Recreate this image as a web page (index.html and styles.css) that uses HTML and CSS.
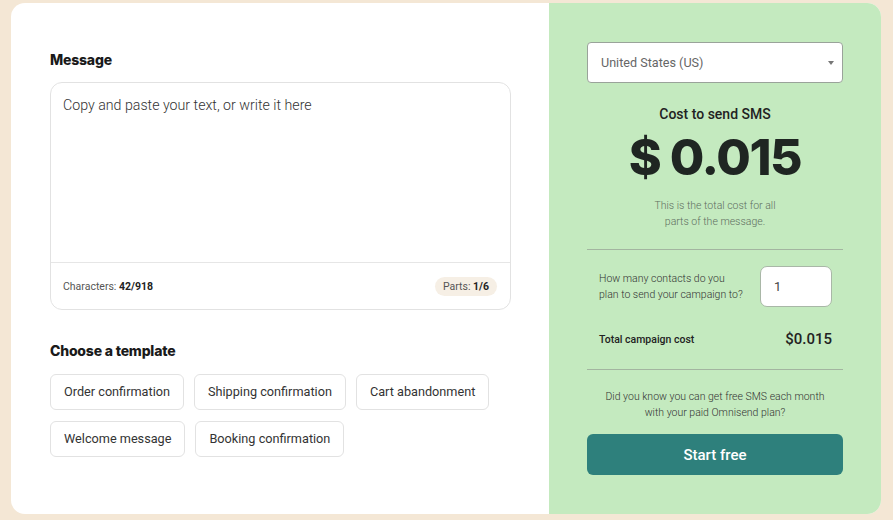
FILE: index.html
```html
<!DOCTYPE html>
<html>
<head>
<meta charset="utf-8">
<link rel="stylesheet" href="styles.css">
</head>
<body>
<div class="card">
  <section class="left">
    <h2 class="heading">Message</h2>
    <div class="msgbox">
      <div class="msgtext">Copy and paste your text, or write it here</div>
      <div class="msgfoot">
        <span class="chars">Characters: <b>42/918</b></span>
        <span class="parts">Parts: <b>1/6</b></span>
      </div>
    </div>
    <h2 class="heading tpl-heading">Choose a template</h2>
    <div class="templates">
      <div class="row">
        <span class="tpl">Order confirmation</span>
        <span class="tpl">Shipping confirmation</span>
        <span class="tpl">Cart abandonment</span>
      </div>
      <div class="row">
        <span class="tpl">Welcome message</span>
        <span class="tpl">Booking confirmation</span>
      </div>
    </div>
  </section>
  <section class="right">
    <div class="select">
      <span>United States (US)</span>
      <span class="caret"></span>
    </div>
    <div class="cost-title">Cost to send SMS</div>
    <div class="cost">$ 0.015</div>
    <div class="cost-note">This is the total cost for all<br>parts of the message.</div>
    <hr class="divider">
    <div class="contacts">
      <div class="contacts-label">How many contacts do you<br>plan to send your campaign to?</div>
      <div class="num-input">1</div>
    </div>
    <div class="total">
      <span class="total-label">Total campaign cost</span>
      <span class="total-val">$0.015</span>
    </div>
    <hr class="divider divider-2">
    <div class="promo">Did you know you can get free SMS each month<br>with your paid Omnisend plan?</div>
    <div class="btn">Start free</div>
  </section>
</div>
</body>
</html>
```

FILE: styles.css
```css
* { box-sizing: border-box; }
html, body { margin: 0; padding: 0; }
body {
  background: #f4e7d5;
  font-family: Roboto, "Liberation Sans", sans-serif;
  color: #222;
  width: 893px;
  height: 520px;
  padding: 3px 12px 6px 11px;
}
.card {
  display: flex;
  height: 511px;
  border-radius: 14px;
  overflow: hidden;
  background: #fff;
}
.left {
  width: 538px;
  padding: 48px 38px 0 39px;
}
.heading {
  margin: 0;
  font-family: Inter, "Open Sans", sans-serif;
  font-weight: 800;
  font-size: 14px;
  letter-spacing: -0.2px;
  line-height: 18px;
  color: #1a1a1a;
}
.msgbox {
  margin-top: 13px;
  width: 461px;
  height: 228px;
  border: 1px solid #e2e2e2;
  border-radius: 12px;
  display: flex;
  flex-direction: column;
}
.msgtext {
  flex: 1;
  padding: 13px 12px;
  font-size: 14.2px;
  font-weight: 300;
  color: #333;
  line-height: 18px;
}
.msgfoot {
  height: 47px;
  border-top: 1px solid #e6e6e6;
  display: flex;
  align-items: center;
  justify-content: space-between;
  padding: 0 13px 0 12px;
  font-size: 10.5px;
  color: #555;
}
.msgfoot b { color: #222; font-weight: 700; }
.parts {
  background: #f6efe5;
  border-radius: 10px;
  padding: 3px 8px;
}
.tpl-heading { margin-top: 32px; }
.templates {
  margin-top: 14px;
  display: flex;
  flex-direction: column;
  gap: 11px;
}
.row { display: flex; gap: 10px; }
.tpl {
  height: 36px;
  display: flex;
  align-items: center;
  padding: 0 13px 1px;
  border: 1px solid #e2e2e2;
  border-radius: 6px;
  font-size: 12.7px;
  color: #333;
}
.right {
  flex: 1;
  background: #c4eabf;
  padding: 39px 38px 0 38px;
  display: flex;
  flex-direction: column;
}
.select {
  height: 41px;
  background: #fff;
  border: 1px solid #9aa39a;
  border-radius: 4px;
  display: flex;
  align-items: center;
  justify-content: space-between;
  padding: 0 8px 0 13px;
  font-size: 12.6px;
  color: #666;
}
.caret {
  width: 0; height: 0;
  border-left: 3px solid transparent;
  border-right: 3px solid transparent;
  border-top: 4px solid #777;
}
.cost-title {
  margin-top: 22px;
  text-align: center;
  font-size: 14px;
  font-weight: 500;
  color: #222;
  line-height: 18px;
}
.cost {
  text-align: center;
  font-family: Inter, sans-serif;
  font-weight: 800;
  font-size: 50px;
  letter-spacing: -1.4px;
  line-height: 60px;
  color: #1f2622;
  margin-top: 4px;
}
.cost-note {
  text-align: center;
  font-size: 10.5px;
  font-weight: 300;
  line-height: 16px;
  color: #5f6f5f;
  margin-top: 11px;
}
.divider {
  border: 0;
  border-top: 1px solid #a3b5a0;
  margin: 19px 0 0 0;
  width: 100%;
}
.contacts {
  margin-top: 16px;
  display: flex;
  align-items: center;
  justify-content: space-between;
  padding: 0 11px 0 12px;
}
.contacts-label {
  font-size: 10.5px;
  font-weight: 300;
  line-height: 16px;
  color: #333;
}
.num-input {
  width: 72px;
  height: 41px;
  background: #fff;
  border: 1px solid #a9b7a7;
  border-radius: 7px;
  display: flex;
  align-items: center;
  padding-left: 13px;
  font-size: 13px;
  color: #444;
}
.total {
  margin-top: 23px;
  display: flex;
  justify-content: space-between;
  align-items: center;
  padding: 0 11px 0 12px;
}
.total-label { font-size: 10.5px; font-weight: 500; color: #222; }
.total-val { font-size: 15px; font-weight: 500; color: #222; }
.divider-2 { margin-top: 21px; }
.promo {
  margin-top: 19px;
  text-align: center;
  font-size: 10.5px;
  font-weight: 300;
  line-height: 16px;
  color: #333;
}
.btn {
  margin-top: 13px;
  height: 41px;
  background: #2e807c;
  border-radius: 6px;
  display: flex;
  align-items: center;
  justify-content: center;
  color: #fff;
  font-size: 15px;
  font-weight: 500;
}
```
